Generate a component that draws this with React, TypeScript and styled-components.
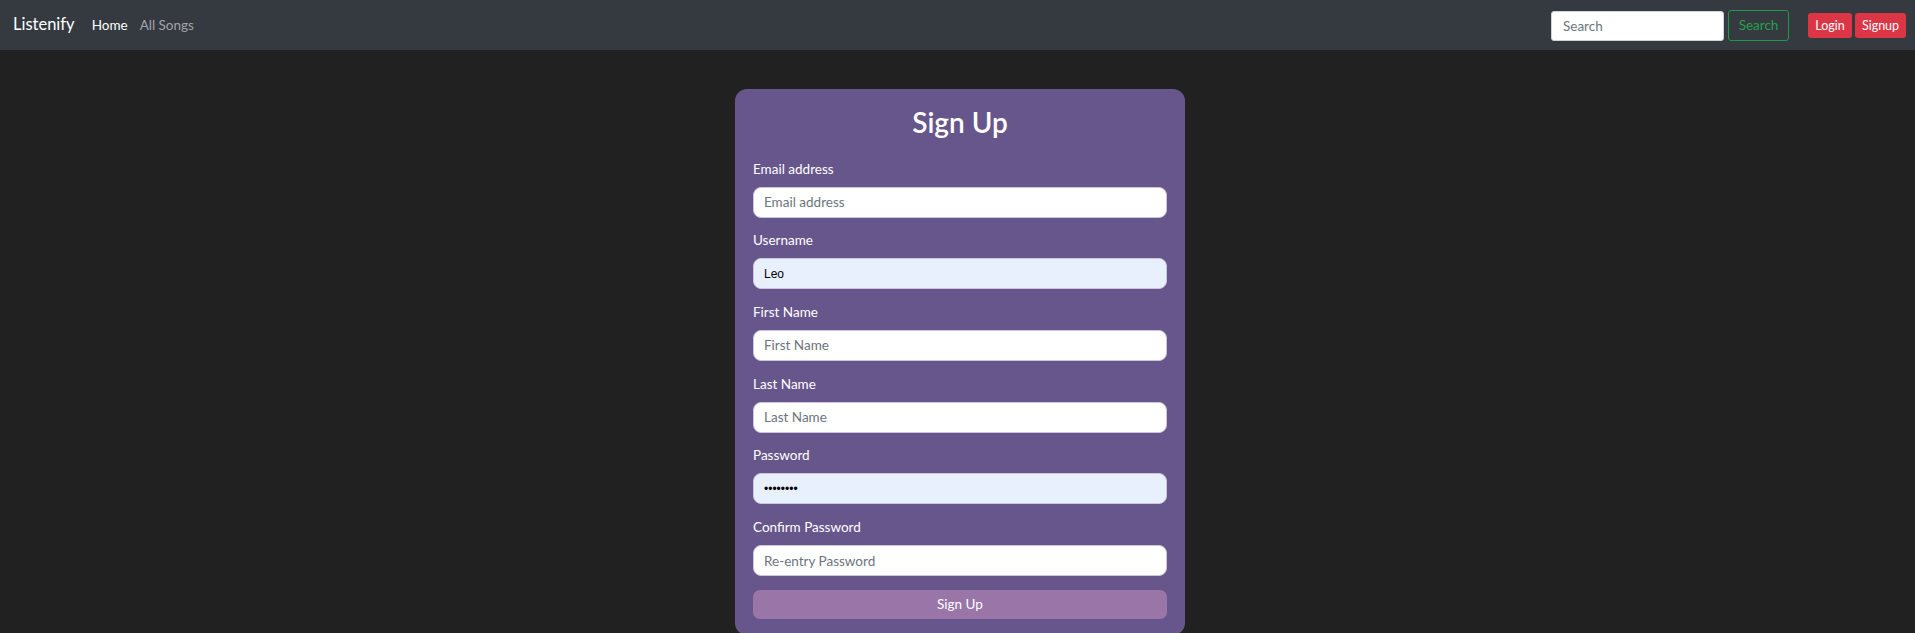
import React from "react";
import styled, { createGlobalStyle } from "styled-components";

const GlobalStyle = createGlobalStyle`
  html, body {
    margin: 0;
    padding: 0;
    background: #212121;
    font-family: "Segoe UI", Lato, "Noto Sans", sans-serif;
  }
  * { box-sizing: border-box; }
`;

const Navbar = styled.nav`
  height: 50px;
  background: #343a40;
  display: flex;
  align-items: center;
  padding: 0 9px 0 13px;
`;

const Brand = styled.a`
  color: #ffffff;
  font-size: 16.5px;
  margin-right: 17px;
  text-decoration: none;
  line-height: 1;
  padding-bottom: 2px;
`;

const NavList = styled.div`
  display: flex;
  gap: 12px;
  flex: 1;
`;

const NavLink = styled.a<{ $active?: boolean }>`
  color: ${(p) => (p.$active ? "#ffffff" : "rgba(255,255,255,0.55)")};
  font-size: 13.5px;
  text-decoration: none;
`;

const SearchForm = styled.form`
  display: flex;
  align-items: center;
  gap: 4px;
  margin-right: 19px;
`;

const SearchInput = styled.input`
  width: 173px;
  height: 30px;
  border: 1px solid #ced4da;
  border-radius: 3px;
  padding: 0 11px;
  font-family: inherit;
  font-size: 13.5px;
  margin-top: 1px;
  &::placeholder { color: #6c757d; }
`;

const OutlineButton = styled.button`
  height: 31px;
  width: 61px;
  border: 1px solid #1f9a48;
  color: #26a04c;
  background: transparent;
  border-radius: 3px;
  font-family: inherit;
  font-size: 13.5px;
  padding: 0;
`;

const AuthGroup = styled.div`
  display: flex;
  gap: 3px;
`;

const DangerButton = styled.button<{ $w: number }>`
  height: 25px;
  width: ${(p) => p.$w}px;
  background: #dc3545;
  color: #ffffff;
  border: none;
  border-radius: 3px;
  font-family: inherit;
  font-size: 12.5px;
  padding: 0;
`;

const Main = styled.main`
  display: flex;
  justify-content: center;
  padding: 39px 0 0 5px;
`;

const Card = styled.form`
  width: 450px;
  background: #67568c;
  border-radius: 12px;
  padding: 17px 18px 16px;
  display: flex;
  flex-direction: column;
`;

const Title = styled.h2`
  margin: 0 0 20px;
  text-align: center;
  color: #ffffff;
  font-size: 28px;
  font-weight: 600;
  line-height: 33.6px;
`;

const Group = styled.div`
  display: flex;
  flex-direction: column;
  margin-bottom: 13.7px;
`;

const Label = styled.label`
  color: #ffffff;
  font-size: 13.5px;
  line-height: 19px;
  margin-bottom: 8px;
`;

const Input = styled.input<{ $filled?: boolean }>`
  height: 31px;
  width: 100%;
  border: 1px solid #cdc6da;
  border-radius: 8px;
  background: ${(p) => (p.$filled ? "#e8f0fe" : "#ffffff")};
  padding: 0 10px;
  font-family: ${(p) => (p.$filled ? "Arial, 'Liberation Sans', sans-serif" : "inherit")};
  font-size: ${(p) => (p.$filled ? "12px" : "13.5px")};
  color: #000000;
  &::placeholder { color: #6c757d; }
  outline: none;
`;

const Submit = styled.button`
  height: 29px;
  width: 100%;
  border: none;
  border-radius: 7px;
  background: #9a76a8;
  color: #ffffff;
  font-family: inherit;
  font-size: 13.5px;
`;

const fields = [
  { label: "Email address", placeholder: "Email address", type: "email" },
  { label: "Username", placeholder: "Username", type: "text", value: "Leo" },
  { label: "First Name", placeholder: "First Name", type: "text" },
  { label: "Last Name", placeholder: "Last Name", type: "text" },
  { label: "Password", placeholder: "Password", type: "password", value: "password" },
  { label: "Confirm Password", placeholder: "Re-entry Password", type: "password" },
];

export default function App() {
  return (
    <>
      <GlobalStyle />
      <Navbar>
        <Brand href="#">Listenify</Brand>
        <NavList>
          <NavLink href="#" $active>Home</NavLink>
          <NavLink href="#">All Songs</NavLink>
        </NavList>
        <SearchForm onSubmit={(e) => e.preventDefault()}>
          <SearchInput placeholder="Search" />
          <OutlineButton type="button">Search</OutlineButton>
        </SearchForm>
        <AuthGroup>
          <DangerButton $w={44}>Login</DangerButton>
          <DangerButton $w={51}>Signup</DangerButton>
        </AuthGroup>
      </Navbar>
      <Main>
        <Card onSubmit={(e) => e.preventDefault()}>
          <Title>Sign Up</Title>
          {fields.map((f) => (
            <Group key={f.label}>
              <Label>{f.label}</Label>
              <Input
                type={f.type}
                placeholder={f.placeholder}
                defaultValue={f.value}
                $filled={!!f.value}
              />
            </Group>
          ))}
          <Submit type="button">Sign Up</Submit>
        </Card>
      </Main>
    </>
  );
}
